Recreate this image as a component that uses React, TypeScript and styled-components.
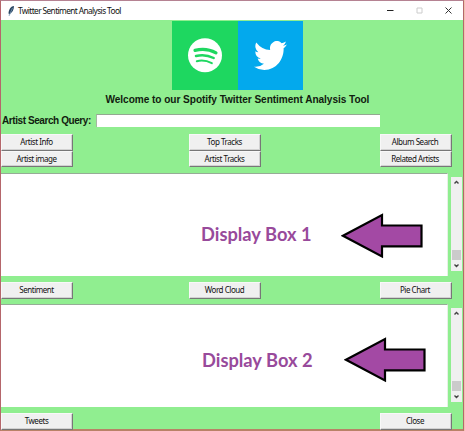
import React from "react";
import styled, { createGlobalStyle } from "styled-components";

const GlobalStyle = createGlobalStyle`
  * { box-sizing: border-box; }
  html, body { margin: 0; padding: 0; overflow: hidden; background: #eec4b0; }
`;

const Window = styled.main`
  width: 464px;
  height: 431px;
  display: flex;
  flex-direction: column;
  background: #90ee90;
  border: 1px solid #b5666b;
  border-top-color: #b58292;
  border-bottom: 2px solid #b98267;
  font-family: "Noto Sans", "Open Sans", sans-serif;
`;

const TitleBar = styled.header`
  height: 19px;
  flex: none;
  display: flex;
  align-items: center;
  background: #fff;
  padding: 0 11px 0 6px;
`;

const Title = styled.span`
  flex: 1;
  margin-left: 3px;
  font: 8.3px/18px "Noto Sans", sans-serif;
  letter-spacing: -0.6px;
  color: #111;
  white-space: nowrap;
`;

const WindowControls = styled.div`
  display: flex;
  align-items: center;
  gap: 22px;
`;

const Logos = styled.div`
  display: flex;
  flex: none;
  width: 131px;
  height: 69px;
  margin: 1px 0 0 171px;
`;

const Logo = styled.div<{ $color: string }>`
  flex: 1;
  display: flex;
  align-items: center;
  justify-content: center;
  background: ${(p) => p.$color};
`;

const Heading = styled.h1`
  margin: 0 0 0 104.5px;
  flex: none;
  height: 24px;
  font: bold 10.1px/19px "Liberation Sans", Arial, sans-serif;
  letter-spacing: -0.05px;
  color: #10200f;
  white-space: nowrap;
`;

const SearchRow = styled.label`
  display: flex;
  flex: none;
  height: 20px;
  padding-left: 1px;
`;

const SearchLabel = styled.span`
  width: 93.5px;
  font: bold 10px/14px "Liberation Sans", Arial, sans-serif;
  letter-spacing: -0.42px;
  color: #10200f;
  white-space: nowrap;
`;

const SearchInput = styled.input`
  width: 284px;
  height: 13px;
  padding: 0 2px;
  border: 0;
  border-top: 1px solid #94a891;
  border-left: 1px solid #a5b8a2;
  border-radius: 0;
  background: #fff;
  outline: none;
  font-size: 9px;
`;

const ButtonGrid = styled.div<{ $height: number; $top?: number }>`
  flex: none;
  height: ${(p) => p.$height}px;
  padding-top: ${(p) => p.$top ?? 0}px;
  display: grid;
  grid-template-columns: 188px 190.5px 72px;
  grid-auto-rows: 16.5px;
  align-content: start;
`;

const Button = styled.button<{ $column?: number }>`
  grid-column: ${(p) => p.$column ?? "auto"};
  width: 72px;
  padding: 0 1px 0 0;
  border: 1px solid #f8f8f8;
  border-right-color: #777;
  border-bottom-color: #777;
  box-shadow: inset -1px -1px #d2d2d2;
  background: #f0f0f0;
  color: #111;
  font: 8px/14px "Noto Sans", sans-serif;
  letter-spacing: -0.45px;
  white-space: nowrap;
`;

const DisplayRow = styled.section`
  display: flex;
  flex: none;
  height: 103px;
`;

const DisplayBox = styled.div<{ $left: number }>`
  width: 447px;
  display: flex;
  align-items: flex-start;
  padding-left: ${(p) => p.$left}px;
  background: #fff;
  border-top: 1px solid #96ac96;
  border-right: 1px solid #e7f2e5;
`;

const DisplayLabel = styled.span<{ $top: number; $width: number }>`
  width: ${(p) => p.$width}px;
  margin-top: ${(p) => p.$top}px;
  font: bold 18.3px/24px Lato, sans-serif;
  color: #984a9b;
  white-space: nowrap;
`;

const ArrowSlot = styled.div<{ $top: number }>`
  display: flex;
  margin-top: ${(p) => p.$top}px;
`;

const ScrollBar = styled.div`
  width: 11px;
  height: 94px;
  margin: 4px 0 0 3px;
  background: #f0f0f0;
  display: flex;
  flex-direction: column;
  align-items: center;
`;

const ScrollThumb = styled.div`
  width: 9px;
  height: 10px;
  margin: auto 0 0;
  background: #cbcbcb;
`;

const Chevron = ({ down = false }: { down?: boolean }) => (
  <svg width="11" height="11" viewBox="0 0 11 11">
    <path
      d={down ? "M3.5 4.5 5.5 6.5 7.5 4.5" : "M3.5 6.5 5.5 4.5 7.5 6.5"}
      fill="none"
      stroke="#444"
      strokeWidth="1.4"
    />
  </svg>
);

const Arrow = () => (
  <svg width="84" height="46" viewBox="0 0 84 46">
    <path
      d="M2 22.8 41 2V12.5H80.5V33.3H41V43.5Z"
      fill="#a349a4"
      stroke="#000"
      strokeWidth="2.2"
    />
  </svg>
);

type DisplayProps = {
  label: string;
  left: number;
  labelTop: number;
  labelWidth: number;
  arrowTop: number;
};

const Display = ({ label, left, labelTop, labelWidth, arrowTop }: DisplayProps) => (
  <DisplayRow>
    <DisplayBox $left={left}>
      <DisplayLabel $top={labelTop} $width={labelWidth}>
        {label}
      </DisplayLabel>
      <ArrowSlot $top={arrowTop}>
        <Arrow />
      </ArrowSlot>
    </DisplayBox>
    <ScrollBar>
      <Chevron />
      <ScrollThumb />
      <Chevron down />
    </ScrollBar>
  </DisplayRow>
);

export default function App() {
  return (
    <>
      <GlobalStyle />
      <Window>
        <TitleBar>
          <svg width="8" height="12" viewBox="0 0 8 12">
            <path d="M7 1C4 1 2 4 1.5 8L2 9.5C5 8 7 5 7 1Z" fill="#284562" />
            <path d="M5.5 3 2 11" stroke="#7899b5" strokeWidth=".8" />
          </svg>
          <Title>Twitter Sentiment Analysis Tool</Title>
          <WindowControls>
            <svg width="7" height="7" viewBox="0 0 7 7">
              <path d="M0 3.5H6.5" stroke="#222" />
            </svg>
            <svg width="7" height="7" viewBox="0 0 7 7">
              <path d="M1 1H6V6H1Z" stroke="#ccc" fill="none" />
            </svg>
            <svg width="7" height="7" viewBox="0 0 7 7">
              <path d="m.5.5 6 6m0-6-6 6" stroke="#333" />
            </svg>
          </WindowControls>
        </TitleBar>
        <Logos>
          <Logo $color="#1ed760">
            <svg width="34" height="35" viewBox="0 0 34 35">
              <circle cx="17" cy="17.3" r="17" fill="#fff" />
              <g fill="none" stroke="#1ed760" strokeLinecap="round">
                <path d="M7 12.4Q18 9.3 28 14.8" strokeWidth="3.2" />
                <path d="M8 18Q17 15.6 25.7 20" strokeWidth="2.5" />
                <path d="M8.8 23.2Q16.5 21.4 23.8 25.2" strokeWidth="2" />
              </g>
            </svg>
          </Logo>
          <Logo $color="#03a9ed">
            <svg width="33" height="29" viewBox="0 2.2 24 19.6" preserveAspectRatio="none">
              <path
                fill="#fff"
                d="M23.95 4.57a10 10 0 0 1-2.82.77 4.96 4.96 0 0 0 2.16-2.72c-.95.55-2 .96-3.13 1.18a4.92 4.92 0 0 0-8.38 4.48A13.93 13.93 0 0 1 1.64 3.16a4.92 4.92 0 0 0 1.52 6.57 4.9 4.9 0 0 1-2.23-.61v.06a4.92 4.92 0 0 0 3.95 4.83 4.99 4.99 0 0 1-2.22.08 4.94 4.94 0 0 0 4.6 3.42A9.87 9.87 0 0 1 0 19.54a13.93 13.93 0 0 0 7.55 2.21c9.05 0 14-7.5 14-13.98 0-.21 0-.42-.02-.63a10 10 0 0 0 2.42-2.57Z"
              />
            </svg>
          </Logo>
        </Logos>
        <Heading>Welcome to our Spotify Twitter Sentiment Analysis Tool</Heading>
        <SearchRow>
          <SearchLabel>Artist Search Query:</SearchLabel>
          <SearchInput />
        </SearchRow>
        <ButtonGrid $height={39}>
          <Button>Artist Info</Button>
          <Button>Top Tracks</Button>
          <Button>Album Search</Button>
          <Button>Artist image</Button>
          <Button>Artist Tracks</Button>
          <Button>Related Artists</Button>
        </ButtonGrid>
        <Display label="Display Box 1" left={200} labelTop={48} labelWidth={140} arrowTop={39} />
        <ButtonGrid $height={28} $top={6}>
          <Button>Sentiment</Button>
          <Button>Word Cloud</Button>
          <Button>Pie Chart</Button>
        </ButtonGrid>
        <Display label="Display Box 2" left={201} labelTop={43} labelWidth={142} arrowTop={32} />
        <ButtonGrid $height={22} $top={6}>
          <Button>Tweets</Button>
          <Button $column={3}>Close</Button>
        </ButtonGrid>
      </Window>
    </>
  );
}
